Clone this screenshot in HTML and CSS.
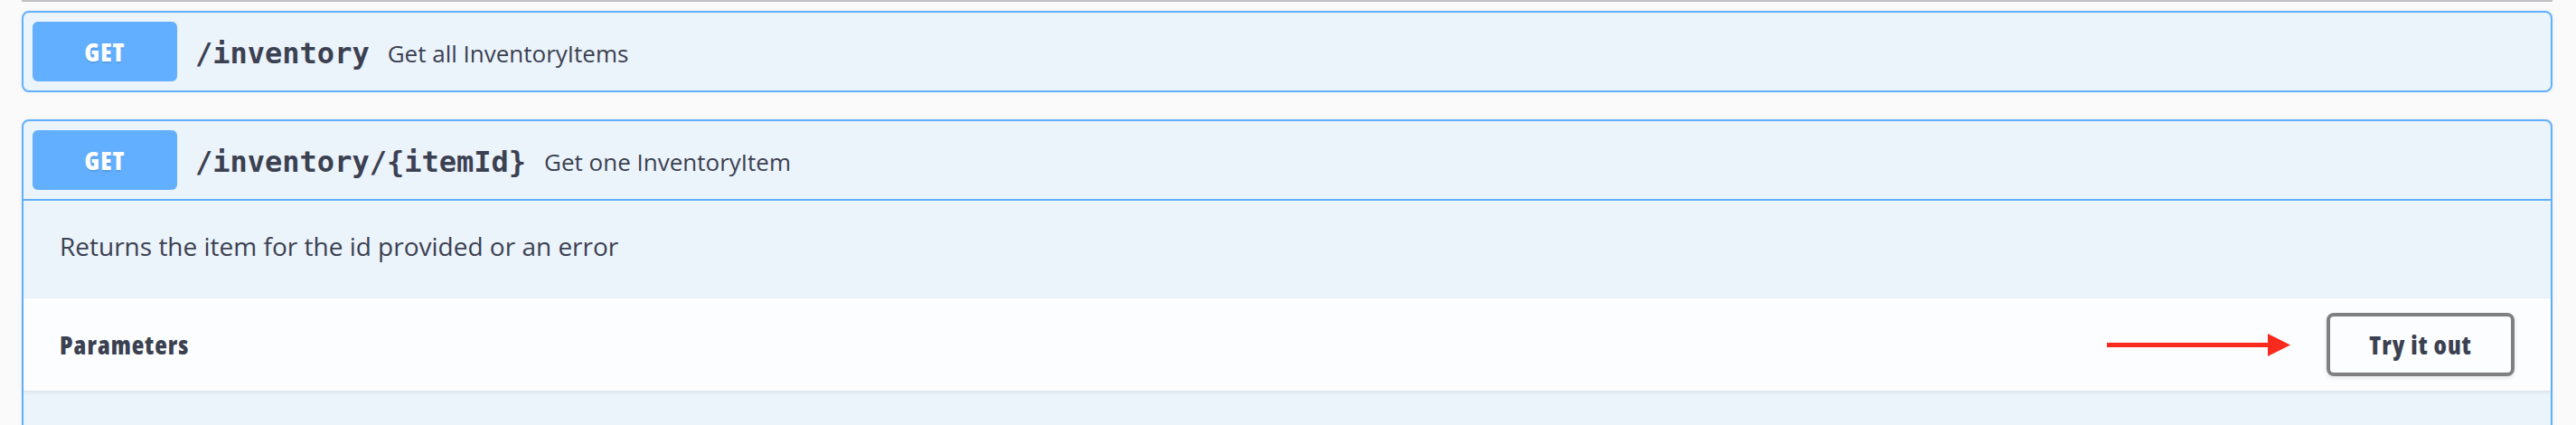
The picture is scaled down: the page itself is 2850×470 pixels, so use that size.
FILE: index.html
```html
<!DOCTYPE html>
<html lang="en">
<head>
<meta charset="utf-8">
<title>Inventory API</title>
<link rel="stylesheet" href="styles.css">
</head>
<body>
<div class="wrapper">
  <div class="topbar"></div>

  <div class="opblock">
    <div class="summary">
      <span class="method">GET</span>
      <span class="path">/inventory</span>
      <span class="summary-desc">Get all InventoryItems</span>
    </div>
  </div>

  <div class="opblock is-open">
    <div class="summary">
      <span class="method">GET</span>
      <span class="path">/inventory/{itemId}</span>
      <span class="summary-desc">Get one InventoryItem</span>
    </div>
    <div class="description">
      <p>Returns the item for the id provided or an error</p>
    </div>
    <div class="section-header">
      <h4 class="section-title">Parameters</h4>
      <svg class="arrow" width="203" height="25" viewBox="0 0 203 25" aria-hidden="true">
        <rect x="0" y="10" width="180" height="5" fill="#fb2a1e"/>
        <polygon points="178,0 203,12.5 178,25" fill="#fb2a1e"/>
      </svg>
      <button class="btn-try">Try it out</button>
    </div>
    <div class="body-rest"></div>
  </div>
</div>
</body>
</html>
```

FILE: styles.css
```css
html, body {
  margin: 0;
  padding: 0;
}

body {
  background: #fafafa;
  color: #3b4151;
  font-family: "Open Sans", "Noto Sans", sans-serif;
  overflow: hidden;
  height: 470px;
}

.wrapper {
  width: 2800px;
  padding-left: 24px;
}

.topbar {
  height: 2px;
  background: #c0c0c4;
  margin-bottom: 10px;
}

.opblock {
  border: 2px solid #61affe;
  border-radius: 8px;
  background: #ebf3fb;
  margin-bottom: 30px;
  box-shadow: 0 0 6px rgba(0, 0, 0, 0.05);
}

.summary {
  display: flex;
  align-items: center;
  padding: 10px;
}

.is-open .summary {
  border-bottom: 2px solid #61affe;
}

.method {
  display: flex;
  align-items: center;
  justify-content: center;
  width: 160px;
  height: 66px;
  border-radius: 6px;
  background: #61affe;
  color: #fff;
  font-size: 28px;
  font-weight: 800;
  font-stretch: 75%;
  letter-spacing: 1px;
  text-shadow: 0 2px 0 rgba(0, 0, 0, 0.1);
}

.path {
  padding: 4px 20px 0;
  font-family: "DejaVu Sans Mono", monospace;
  font-size: 32px;
  font-weight: 700;
  color: #3b4151;
}

.summary-desc {
  padding-top: 3px;
  font-size: 26px;
  color: #3b4151;
}

.description {
  padding: 26px 40px 34px;
}

.description p {
  margin: 0;
  font-size: 28px;
  line-height: 48px;
}

.section-header {
  display: flex;
  align-items: center;
  height: 102px;
  padding: 0 40px;
  background: rgba(255, 255, 255, 0.8);
  box-shadow: 0 2px 4px rgba(0, 0, 0, 0.08);
}

.section-title {
  flex: 1;
  margin: 0;
  font-size: 28px;
  font-weight: 800;
  font-stretch: 75%;
  letter-spacing: 1px;
}

.arrow {
  display: block;
  margin-right: 40px;
}

.btn-try {
  box-sizing: border-box;
  width: 208px;
  height: 70px;
  padding: 0;
  border: 4px solid #808080;
  border-radius: 8px;
  background: transparent;
  box-shadow: 0 2px 4px rgba(0, 0, 0, 0.1);
  color: #3b4151;
  font-family: "Open Sans", "Noto Sans", sans-serif;
  font-size: 28px;
  font-weight: 800;
  font-stretch: 75%;
  letter-spacing: 1px;
}

.body-rest {
  height: 60px;
}
```
